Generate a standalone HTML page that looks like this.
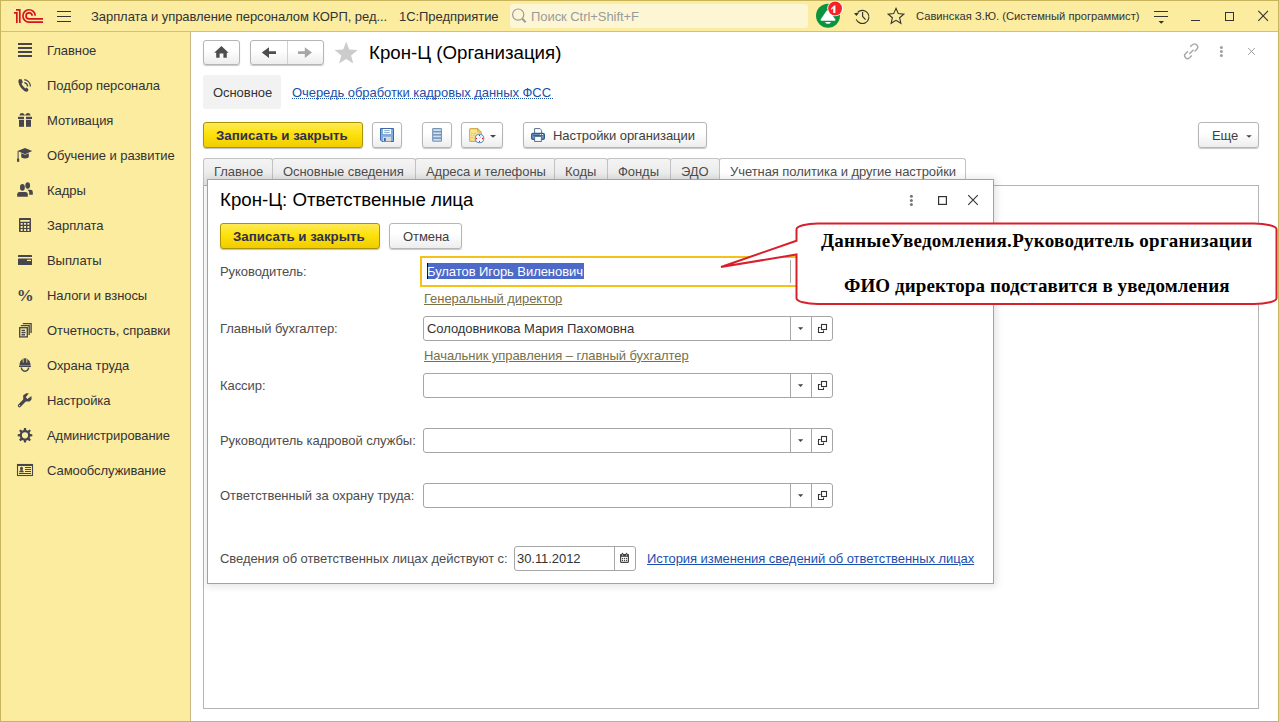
<!DOCTYPE html>
<html><head><meta charset="utf-8">
<style>
*{box-sizing:border-box;margin:0;padding:0}
html,body{width:1279px;height:722px;overflow:hidden;background:#fff;font-family:"Liberation Sans",sans-serif;font-size:13px;color:#4d4d4d}
.a{position:absolute}
svg{position:absolute;overflow:visible}
.t{position:absolute;white-space:nowrap;line-height:16px;letter-spacing:-0.06px}
.si{left:47px;color:#333}
.btn{position:absolute;border:1px solid #b5b5b5;border-radius:3px;background:linear-gradient(#ffffff,#ffffff 40%,#ededed);box-shadow:0 1px 1px rgba(0,0,0,.22)}
.ybtn{position:absolute;border:1px solid #ab9400;border-radius:3px;background:linear-gradient(#ffe95a,#fde20c 45%,#f0cc00);box-shadow:0 1px 1px rgba(0,0,0,.25)}
.bt{font-weight:bold;color:#2f2f4f;font-size:13.3px;letter-spacing:0}
.tab{position:absolute;top:158px;height:28px;border:1px solid #c2c2c2;border-bottom:none;background:linear-gradient(#f4f4f4,#e4e4e4);border-radius:3px 3px 0 0}
.inp{position:absolute;left:423px;width:410px;height:25px;border:1px solid #a6a6a6;border-radius:3px;background:#fff}
.inp i{position:absolute;top:0;width:1px;height:23px;background:#a6a6a6}
.lbl{left:220px;color:#4d4d4d}
.lnk{color:#1a4fb0;text-decoration:underline}
.blnk{color:#787048;text-decoration:underline}
.srf{font-family:"Liberation Serif",serif;font-weight:bold;font-size:19px;line-height:22px;color:#000;letter-spacing:0}
</style></head><body>
<!-- ===== top bar ===== -->
<div class="a" style="left:0;top:0;width:1279px;height:32px;background:#fbeca0;border-top:1px solid #c9b45e;border-left:1px solid #c9b45e;border-right:1px solid #c9b45e;border-bottom:1px solid #cdbf86"></div>
<!-- 1C logo -->
<svg style="left:0;top:0" width="50" height="30" viewBox="0 0 50 30">
 <g fill="none" stroke="#d6141e" stroke-width="1.7">
  <path d="M16 9.85H19.8V23"/>
  <path d="M14 12.85H16.85V23"/>
  <path d="M35.2 15.7A6.15 6.15 0 1 0 29.1 22.05H43"/>
  <path d="M32.15 15.7A3.05 3.05 0 1 0 29.1 18.95H43"/>
 </g>
</svg>
<!-- hamburger -->
<div class="a" style="left:57px;top:11px;width:14px;height:1px;background:#333"></div>
<div class="a" style="left:57px;top:16px;width:14px;height:1px;background:#333"></div>
<div class="a" style="left:57px;top:21px;width:14px;height:1px;background:#333"></div>
<div class="t" style="left:91px;top:9px;color:#333">Зарплата и управление персоналом КОРП, ред...</div>
<div class="t" style="left:399px;top:9px;color:#333">1С:Предприятие</div>
<div class="a" style="left:510px;top:4px;width:298px;height:24px;background:#fdf6d4;border-radius:3px"></div>
<svg style="left:510px;top:4px" width="22" height="24" viewBox="510 4 22 24">
 <circle cx="518.2" cy="14.6" r="5.6" fill="none" stroke="#9a9a9a" stroke-width="1.2"/>
 <path d="M522.2 18.6L525.6 22.2" stroke="#9a9a9a" stroke-width="2"/>
</svg>
<div class="t" style="left:531px;top:9px;color:#9a9a9a">Поиск Ctrl+Shift+F</div>
<!-- bell -->
<svg style="left:810px;top:0" width="40" height="32" viewBox="810 0 40 32">
 <circle cx="828" cy="15.85" r="12" fill="#0b9340"/>
 <path d="M826.8 10.4H829.2L835.2 19.2V20.8H820.8V19.2Z" fill="#fff"/>
 <path d="M825 21.9H831C830.4 23.2 829.4 23.8 828 23.8C826.6 23.8 825.6 23.2 825 21.9Z" fill="#fff"/>
 <circle cx="835.1" cy="8.5" r="7.8" fill="#fff"/>
 <circle cx="835.1" cy="8.5" r="6.9" fill="#f52226"/>
 <path d="M831.2 8.3L834.1 5.4H835.4V13H833.2V8.2L831.2 9.9Z" fill="#fff"/>
</svg>
<!-- history -->
<svg style="left:850px;top:4px" width="24" height="24" viewBox="850 4 24 24">
 <path d="M857.8 12.1A6.6 6.6 0 1 1 856.2 19.4" fill="none" stroke="#333" stroke-width="1.15"/>
 <path d="M854 13.2L859.2 12.6L856.5 16Z" fill="#333"/>
 <path d="M862.6 12.1V16.5L865.6 19.6" fill="none" stroke="#333" stroke-width="1.15"/>
</svg>
<!-- star outline -->
<svg style="left:886px;top:6px" width="20" height="20" viewBox="0 0 20 20">
 <path d="M10 2.3L12.3 7.6L17.8 8.1L13.6 11.8L14.9 17.3L10 14.4L5.1 17.3L6.4 11.8L2.2 8.1L7.7 7.6Z" fill="none" stroke="#333" stroke-width="1.1" stroke-linejoin="miter"/>
</svg>
<div class="t" style="left:916px;top:8px;color:#333;font-size:11.2px;letter-spacing:0">Савинская З.Ю. (Системный программист)</div>
<!-- funnel -->
<div class="a" style="left:1154px;top:11px;width:14px;height:1px;background:#333"></div>
<div class="a" style="left:1154px;top:16px;width:14px;height:1px;background:#333"></div>
<svg style="left:1150px;top:18px" width="20" height="10" viewBox="0 0 20 10"><path d="M8.5 3H14L11.25 5.8Z" fill="#333"/></svg>
<!-- window controls -->
<div class="a" style="left:1191px;top:20px;width:9px;height:1px;background:#333"></div>
<div class="a" style="left:1225px;top:12px;width:9px;height:9px;border:1px solid #333"></div>
<svg style="left:1250px;top:4px" width="24" height="24" viewBox="0 0 24 24"><path d="M8.3 6.9L18 16.9M18 6.9L8.3 16.9" stroke="#333" stroke-width="1.1"/></svg>

<!-- ===== sidebar ===== -->
<div class="a" style="left:0;top:32px;width:191px;height:690px;background:#fbeca0;border-left:1px solid #c9b45e;border-right:1px solid #c6b880"></div>
<div class="a" style="left:191px;top:721px;width:1088px;height:1px;background:#c9b45e"></div>
<div class="a" style="left:1278px;top:32px;width:1px;height:690px;background:#c9b45e"></div>
<div class="a" style="left:0;top:721px;width:191px;height:1px;background:#c9b45e"></div>

<svg style="left:0;top:32px" width="40" height="460" viewBox="0 32 40 460">
 <g fill="#46464c">
  <!-- главное -->
  <rect x="18" y="43" width="14" height="2"/><rect x="18" y="47" width="14" height="2"/><rect x="18" y="51" width="14" height="2"/><rect x="18" y="55" width="14" height="2"/>
  <!-- phone -->
  <path d="M19.6 78.9L21.9 79.4L22.8 82.6L21.5 83.6C22.3 85.6 23.7 87.3 25.3 88.4L26.6 87.5L28.5 89.6L27.9 91.3C26.9 92 25.5 91.9 24.3 91C21.3 88.8 18.9 85.4 18.4 81.8C18.3 80.6 18.7 79.5 19.6 78.9Z"/>
  <path d="M24.3 79.6A7 7 0 0 1 30.4 86.4" fill="none" stroke="#46464c" stroke-width="1.25"/>
  <path d="M24.3 82.7A3.9 3.9 0 0 1 27.6 86.4" fill="none" stroke="#46464c" stroke-width="1.25"/>
  <!-- gift -->
  <path d="M19.5 115.6C19.5 113.6 21 112.9 22.2 112.9C23.6 112.9 24.6 114.4 25 115.6Z"/>
  <path d="M25 115.6C25.4 114.4 26.4 112.9 27.8 112.9C29 112.9 30.5 113.6 30.5 115.6Z"/>
  <rect x="18" y="116.8" width="6" height="2.2"/><rect x="26" y="116.8" width="6" height="2.2"/>
  <rect x="19" y="119.8" width="5" height="7"/><rect x="26" y="119.8" width="5" height="7"/>
  <!-- grad cap -->
  <path d="M17.5 151L25 147.9L32.2 151L25 154.2Z"/>
  <path d="M21.2 153.2L25 154.8L28.8 153.2V156.8C28.8 157.9 27 158.4 25 158.4C23 158.4 21.2 157.9 21.2 156.8Z"/>
  <rect x="17.6" y="151" width="1" height="9"/><rect x="17" y="158.6" width="2.2" height="3.2"/>
  <!-- people -->
  <ellipse cx="22.4" cy="187.4" rx="2.4" ry="3.3"/>
  <path d="M17.2 196.8V194.2Q17.2 192 19.6 192H25.4Q27.8 192 27.8 194.2V196.8Z"/>
  <ellipse cx="27.7" cy="185.4" rx="2.35" ry="3.25"/>
  <path d="M27.2 189.8H30.6Q32.8 189.8 32.8 192V194.7H29.2V192.4Q29.2 190.8 27.2 189.8Z"/>
  <!-- calculator -->
  <path d="M19.8 218H30.2Q31 218 31 218.8V231.2Q31 232 30.2 232H19.8Q19 232 19 231.2V218.8Q19 218 19.8 218ZM20.3 219.9V221.8H29.7V219.9ZM20.7 222.9H22.65V224.85H20.7ZM24.05 222.9H26.0V224.85H24.05ZM27.4 222.9H29.349999999999998V224.85H27.4ZM20.7 226.0H22.65V227.95H20.7ZM24.05 226.0H26.0V227.95H24.05ZM27.4 226.0H29.349999999999998V227.95H27.4ZM20.7 229.0H22.65V230.95H20.7ZM24.05 229.0H26.0V230.95H24.05ZM27.4 229.0H29.349999999999998V230.95H27.4Z" fill-rule="evenodd"/>
  <!-- card -->
  <rect x="18" y="255" width="14" height="2" rx=".6"/>
  <path d="M18.6 258.6H31.4Q32 258.6 32 259.2V264.4Q32 265 31.4 265H18.6Q18 265 18 264.4V259.2Q18 258.6 18.6 258.6ZM27 259.8V261H31V259.8Z" fill-rule="evenodd"/>
 </g>
 <text x="16.8" y="301" font-family="Liberation Serif" font-weight="bold" font-size="17" fill="#46464c">%</text>
 <g fill="none" stroke="#46464c" stroke-width="1.35">
  <!-- docs -->
  <rect x="19.7" y="327.7" width="7.6" height="9.2"/>
  <path d="M20.8 325.6H29.2V335"/><path d="M22.8 323.6H31.1V333"/>
  <path d="M21.5 330.3H25M21.5 332.5H25.5M21.5 334.7H25"/>
 </g>
 <g fill="#46464c">
  <!-- helmet -->
  <path d="M19.5 365.2C19.5 361.4 21.6 358.8 25 358.2C28.4 358.8 30.5 361.4 30.5 365.2Z"/><path d="M23.2 358.9V362.6M26.8 358.9V362.6" stroke="#fbeca0" stroke-width=".8"/>
  <rect x="19" y="365.6" width="12" height="1.4" rx=".5"/>
  <path d="M20.6 367.6H22C22.4 369.4 23.4 370.6 25 370.6C26.6 370.6 27.6 369.4 28 367.6H29.4C29.2 370 27.6 372 25 372C22.4 372 20.8 370 20.6 367.6Z"/>
  <!-- wrench -->
  <path d="M23.2 395.2L26.3 393.3H28.8L25.8 397.3L27.3 398.9L31.5 396V399.4L29.6 401.5H25.8L20.7 406.8Q19.4 408 18.2 406.8Q17.1 405.6 18.3 404.4L23.2 399.4ZM19.5 404.9A.7 .7 0 1 0 19.5 406.3A.7 .7 0 1 0 19.5 404.9Z" fill-rule="evenodd"/>
  <!-- gear -->
  <path d="M24 428H26L26.3 430.1L27.8 430.7L29.5 429.4L30.9 430.8L29.6 432.5L30.2 434L32.3 434.3V436.3L30.2 436.6L29.6 438.1L30.9 439.8L29.5 441.2L27.8 439.9L26.3 440.5L26 442.6H24L23.7 440.5L22.2 439.9L20.5 441.2L19.1 439.8L20.4 438.1L19.8 436.6L17.7 436.3V434.3L19.8 434L20.4 432.5L19.1 430.8L20.5 429.4L22.2 430.7L23.7 430.1ZM25 432.2A3.1 3.1 0 1 0 25 438.4A3.1 3.1 0 1 0 25 432.2Z" fill-rule="evenodd"/>
 </g>
 <g fill="none" stroke="#46464c" stroke-width="1.1">
  <!-- id card -->
  <rect x="17.5" y="464.5" width="15" height="11"/>
 </g>
 <g fill="#46464c">
  <rect x="17.5" y="464" width="15" height="2"/>
  <ellipse cx="21.5" cy="468.6" rx="1.5" ry="1.8"/><path d="M19.2 472.2C19.2 470.8 20.2 470.2 21.5 470.2C22.8 470.2 23.8 470.8 23.8 472.2Z"/>
  <rect x="25" y="467" width="6" height="1"/><rect x="25" y="469" width="6" height="1"/><rect x="25" y="471" width="6" height="1"/>
  <rect x="19" y="473" width="12" height="1"/>
 </g>
</svg>

<div class="si t" style="top:43px">Главное</div>
<div class="si t" style="top:78px">Подбор персонала</div>
<div class="si t" style="top:113px">Мотивация</div>
<div class="si t" style="top:148px">Обучение и развитие</div>
<div class="si t" style="top:183px">Кадры</div>
<div class="si t" style="top:218px">Зарплата</div>
<div class="si t" style="top:253px">Выплаты</div>
<div class="si t" style="top:288px">Налоги и взносы</div>
<div class="si t" style="top:323px">Отчетность, справки</div>
<div class="si t" style="top:358px">Охрана труда</div>
<div class="si t" style="top:393px">Настройка</div>
<div class="si t" style="top:428px">Администрирование</div>
<div class="si t" style="top:463px">Самообслуживание</div>

<!-- ===== main header ===== -->
<div class="btn" style="left:203px;top:40px;width:37px;height:25px"></div>
<svg style="left:203px;top:40px" width="37" height="25" viewBox="203 40 37 25">
 <path d="M221.4 46L228.6 52.8H226.8V57.8H223.4V53.6H219.6V57.8H216.2V52.8H214.2Z" fill="#4d4d4d"/>
</svg>
<div class="btn" style="left:250px;top:40px;width:74px;height:25px"></div>
<div class="a" style="left:287px;top:41px;width:1px;height:23px;background:#d0d0d0"></div>
<svg style="left:250px;top:40px" width="74" height="25" viewBox="250 40 74 25">
 <path d="M261.8 52.6L269 47.2V51.3H276V54H269V58Z" fill="#4d4d4d"/>
 <path d="M312 52.6L304.8 47.2V51.3H298V54H304.8V58Z" fill="#a6a6a6"/>
</svg>
<svg style="left:330px;top:38px" width="32" height="28" viewBox="330 38 32 28">
 <path d="M346.2 41.6L349.2 49.4L357.8 49.9L351.1 55.4L353.3 63.6L346.2 59L339.1 63.6L341.3 55.4L334.6 49.9L343.2 49.4Z" fill="#cccccc"/>
</svg>
<div class="t" style="left:369px;top:42px;font-size:18.7px;line-height:22px;color:#000;letter-spacing:0">Крон-Ц (Организация)</div>
<!-- link / dots / close -->
<svg style="left:1180px;top:40px" width="80" height="24" viewBox="1180 40 80 24">
 <g fill="none" stroke="#a8a8a8" stroke-width="1.4">
  <path d="M1190.2 46.6L1192.8 44.5C1194 43.7 1195.7 43.8 1196.8 44.9C1198 46.1 1198 47.8 1197 49L1194.6 51.4"/>
  <path d="M1188 51.2L1185.6 53.6C1184.4 54.8 1184.4 56.6 1185.5 57.7C1186.6 58.8 1188.4 58.8 1189.6 57.7L1191.8 55.4"/>
  <path d="M1189.3 54.1L1193.6 49.8"/>
 </g>
 <circle cx="1221.4" cy="47.5" r="1.5" fill="#a0a0a0"/><circle cx="1221.4" cy="51.5" r="1.5" fill="#a0a0a0"/><circle cx="1221.4" cy="55.5" r="1.5" fill="#a0a0a0"/>
 <path d="M1248.2 48L1254.8 54.8M1254.8 48L1248.2 54.8" stroke="#a0a0a0" stroke-width="1"/>
</svg>

<div class="a" style="left:203px;top:75px;width:78px;height:34px;background:#f2f2f2;border-radius:3px"></div>
<div class="t" style="left:213px;top:85px;color:#333">Основное</div>
<div class="t" style="left:292px;top:85px;color:#1a4fb0">Очередь обработки кадровых данных ФСС</div>
<div class="a" style="left:292px;top:98px;width:261px;height:1px;border-top:1px dotted #1a4fb0"></div>

<!-- ===== toolbar ===== -->
<div class="ybtn" style="left:203px;top:122px;width:160px;height:26px"></div>
<div class="t bt" style="left:216px;top:128px">Записать и закрыть</div>
<div class="btn" style="left:372px;top:122px;width:30px;height:26px"></div>
<svg style="left:372px;top:122px" width="30" height="26" viewBox="372 122 30 26">
 <path d="M380.5 128.5H393.5V141.5H382L380.5 140Z" fill="#80abde" stroke="#3b6aa6" stroke-width="1"/>
 <rect x="383" y="129" width="8" height="5" fill="#fff"/>
 <path d="M384.2 130.6H389.8M384.2 132.6H389.8" stroke="#7b9cc4" stroke-width=".9"/>
 <rect x="383" y="136.8" width="8" height="4.6" fill="#d7dbd6"/>
 <rect x="384" y="138" width="1.8" height="3.2" fill="#3b6aa6"/>
</svg>
<div class="btn" style="left:422px;top:122px;width:30px;height:26px"></div>
<svg style="left:422px;top:122px" width="30" height="26" viewBox="422 122 30 26">
 <rect x="432.1" y="128" width="9.9" height="13.8" rx="1.3" fill="#7494b4"/>
 <g fill="#cde0f2"><rect x="433.2" y="129.2" width="7.7" height="1.8"/><rect x="433.2" y="132.4" width="7.7" height="1.7"/><rect x="433.2" y="135.6" width="7.7" height="1.7"/><rect x="433.2" y="138.9" width="7.7" height="1.7"/></g>
</svg>
<div class="btn" style="left:461px;top:122px;width:42px;height:26px"></div>
<svg style="left:461px;top:122px" width="42" height="26" viewBox="461 122 42 26">
 <path d="M470.6 128.6H477.6L481.4 132.4V140.4Q481.4 141.4 480.4 141.4H470.6Q469.6 141.4 469.6 140.4V129.6Q469.6 128.6 470.6 128.6Z" fill="#f8e394" stroke="#d3ae4a" stroke-width="1.1"/>
 <path d="M477.6 128.8V131.4Q477.6 132.2 478.4 132.2H481.2" fill="none" stroke="#d3ae4a" stroke-width="1"/>
 <path d="M471.2 133.4H472.6M474 133.4H476.2M471.2 135.4H471.8M472.8 135.4H474.4M471.2 137.6H473.4" stroke="#dcbc5c" stroke-width=".9"/>
 <circle cx="479.5" cy="138.5" r="4.3" fill="#fff" stroke="#5f90c6" stroke-width="1.1"/>
 <g fill="#e81010"><circle cx="479.5" cy="135.5" r=".65"/><circle cx="479.5" cy="141.5" r=".65"/><circle cx="476.5" cy="138.5" r=".65"/><circle cx="482.5" cy="138.5" r=".65"/></g>
 <path d="M479.6 138.4L481 136.4" stroke="#7aa0d0" stroke-width=".8"/>
 <path d="M490 135H496L493 137.8Z" fill="#444"/>
</svg>
<div class="btn" style="left:523px;top:122px;width:184px;height:26px"></div>
<svg style="left:523px;top:122px" width="30" height="26" viewBox="523 122 30 26">
 <path d="M534.6 133.2V128.6H540L541.6 130.4V133.2" fill="#fff" stroke="#55708f" stroke-width="1"/>
 <rect x="531.6" y="133.4" width="12.8" height="5.9" rx="1.4" fill="#6b96c9" stroke="#2b5a8c" stroke-width="1.2"/>
 <path d="M533.2 135.4H542.8" stroke="#2b5a8c" stroke-width="1"/>
 <rect x="540" y="134.1" width="1" height="1" fill="#fff"/><rect x="542" y="134.1" width="1" height="1" fill="#fff"/>
 <rect x="534.6" y="136.4" width="6.8" height="5" fill="#fff" stroke="#55708f" stroke-width="1"/>
</svg>
<div class="t" style="left:553px;top:128px;color:#404040">Настройки организации</div>
<div class="btn" style="left:1198px;top:122px;width:61px;height:26px"></div>
<div class="t" style="left:1212px;top:128px;color:#404040">Еще</div>
<svg style="left:1240px;top:130px" width="16" height="10" viewBox="1240 130 16 10"><path d="M1246.2 135.3H1251.8L1249 137.8Z" fill="#444"/></svg>

<!-- ===== tabs ===== -->
<div class="tab" style="left:203px;width:70px"></div>
<div class="tab" style="left:272px;width:144px"></div>
<div class="tab" style="left:415px;width:141px"></div>
<div class="tab" style="left:554px;width:54px"></div>
<div class="tab" style="left:607px;width:64px"></div>
<div class="tab" style="left:670px;width:50px"></div>
<div class="tab" style="left:719px;width:247px;background:#fff"></div>
<div class="t" style="left:214px;top:164px">Главное</div>
<div class="t" style="left:283px;top:164px">Основные сведения</div>
<div class="t" style="left:426px;top:164px">Адреса и телефоны</div>
<div class="t" style="left:565px;top:164px">Коды</div>
<div class="t" style="left:618px;top:164px">Фонды</div>
<div class="t" style="left:681px;top:164px">ЭДО</div>
<div class="t" style="left:730px;top:164px">Учетная политика и другие настройки</div>
<div class="a" style="left:203px;top:185px;width:1056px;height:524px;border:1px solid #b4b4b4"></div>

<!-- ===== dialog ===== -->
<div class="a" style="left:207px;top:179px;width:787px;height:405px;background:#fff;border:1px solid #a2a2a2;box-shadow:1px 1px 7px 2px rgba(0,0,0,.1)"></div>
<div class="t" style="left:220px;top:189px;font-size:18.7px;line-height:22px;color:#000;letter-spacing:0">Крон-Ц: Ответственные лица</div>
<svg style="left:900px;top:190px" width="90" height="20" viewBox="900 190 90 20">
 <circle cx="911.4" cy="196.3" r="1.5" fill="#777"/><circle cx="911.4" cy="200.4" r="1.5" fill="#777"/><circle cx="911.4" cy="204.4" r="1.5" fill="#777"/>
 <rect x="938.6" y="196.6" width="7.8" height="7.8" fill="none" stroke="#333" stroke-width="1.2"/>
 <path d="M968.2 195.2L977.8 204.8M977.8 195.2L968.2 204.8" stroke="#333" stroke-width="1.1"/>
</svg>
<div class="ybtn" style="left:220px;top:223px;width:160px;height:26px"></div>
<div class="t bt" style="left:233px;top:229px">Записать и закрыть</div>
<div class="btn" style="left:389px;top:223px;width:73px;height:26px"></div>
<div class="t" style="left:403px;top:229px;color:#404040">Отмена</div>

<div class="lbl t" style="top:264px">Руководитель:</div>
<div class="a" style="left:420px;top:256px;width:380px;height:31px;border:2px solid #f5c018;background:#fff"></div>
<div class="a" style="left:790px;top:260px;width:1px;height:23px;background:#a8a8a8"></div>
<div class="a" style="left:427px;top:263px;width:157px;height:16px;background:#4e6ac8"></div>
<div class="a" style="left:427px;top:263px;width:1px;height:16px;background:#000"></div>
<div class="t" style="left:427px;top:264px;color:#fff">Булатов Игорь Виленович</div>
<div class="t blnk" style="left:424px;top:291px">Генеральный директор</div>

<div class="lbl t" style="top:321px">Главный бухгалтер:</div>
<div class="inp" style="top:316px"><i style="left:366px"></i><i style="left:387px"></i></div>
<div class="t" style="left:427px;top:321px;color:#333">Солодовникова Мария Пахомовна</div>
<div class="t blnk" style="left:424px;top:348px">Начальник управления – главный бухгалтер</div>

<div class="lbl t" style="top:378px">Кассир:</div>
<div class="inp" style="top:373px"><i style="left:366px"></i><i style="left:387px"></i></div>
<div class="lbl t" style="top:433px">Руководитель кадровой службы:</div>
<div class="inp" style="top:428px"><i style="left:366px"></i><i style="left:387px"></i></div>
<div class="lbl t" style="top:488px">Ответственный за охрану труда:</div>
<div class="inp" style="top:483px"><i style="left:366px"></i><i style="left:387px"></i></div>
<svg style="left:790px;top:310px" width="50" height="200" viewBox="790 310 50 200">
 <g id="ddi">
  <path d="M798 327.2H803.2L800.6 330Z" fill="#444"/>
  <rect x="821.5" y="324.5" width="5" height="5" fill="none" stroke="#333" stroke-width="1.1"/>
  <path d="M820.5 327.5H818.5V332.5H823.5V330.5" fill="none" stroke="#333" stroke-width="1.1"/>
 </g>
 <use href="#ddi" y="57"/><use href="#ddi" y="112"/><use href="#ddi" y="167"/>
</svg>

<div class="lbl t" style="top:551px">Сведения об ответственных лицах действуют с:</div>
<div class="a" style="left:514px;top:546px;width:122px;height:25px;border:1px solid #a6a6a6;border-radius:3px"></div>
<div class="a" style="left:614px;top:547px;width:1px;height:23px;background:#a6a6a6"></div>
<svg style="left:614px;top:546px" width="22" height="25" viewBox="614 546 22 25">
 <rect x="620.6" y="554.6" width="7.8" height="7.8" rx="1" fill="none" stroke="#444" stroke-width="1.2"/>
 <rect x="620.2" y="554.2" width="8.6" height="2.6" fill="#444"/>
 <circle cx="622.5" cy="553.6" r=".8" fill="#444"/><circle cx="626.5" cy="553.6" r=".8" fill="#444"/>
 <circle cx="622.5" cy="555" r=".55" fill="#fff"/><circle cx="626.5" cy="555" r=".55" fill="#fff"/>
 <g fill="#444"><circle cx="622.5" cy="558.5" r=".65"/><circle cx="624.5" cy="558.5" r=".65"/><circle cx="626.5" cy="558.5" r=".65"/><circle cx="622.5" cy="560.5" r=".65"/><circle cx="624.5" cy="560.5" r=".65"/><circle cx="626.5" cy="560.5" r=".65"/></g>
</svg>
<div class="t" style="left:517px;top:551px;color:#333">30.11.2012</div>
<div class="t lnk" style="left:647px;top:551px">История изменения сведений об ответственных лицах</div>

<!-- ===== callout ===== -->
<svg style="left:700px;top:215px" width="579" height="95" viewBox="700 215 579 95">
 <path d="M818 223.5H1254A22.5 5.8 0 0 1 1276.5 229.3V298.2A22.5 5.8 0 0 1 1254 304H818A21.5 5.8 0 0 1 796.5 298.2V254.5L721 267L796.5 240.7V229.3A21.5 5.8 0 0 1 818 223.5Z" fill="#fff" stroke="#d8202c" stroke-width="2" stroke-linejoin="miter"/>
</svg>
<div class="t srf" style="left:821px;top:230px;letter-spacing:.27px">ДанныеУведомления.Руководитель организации</div>
<div class="t srf" style="left:844px;top:275px;letter-spacing:.1px">ФИО директора подставится в уведомления</div>
</body></html>
